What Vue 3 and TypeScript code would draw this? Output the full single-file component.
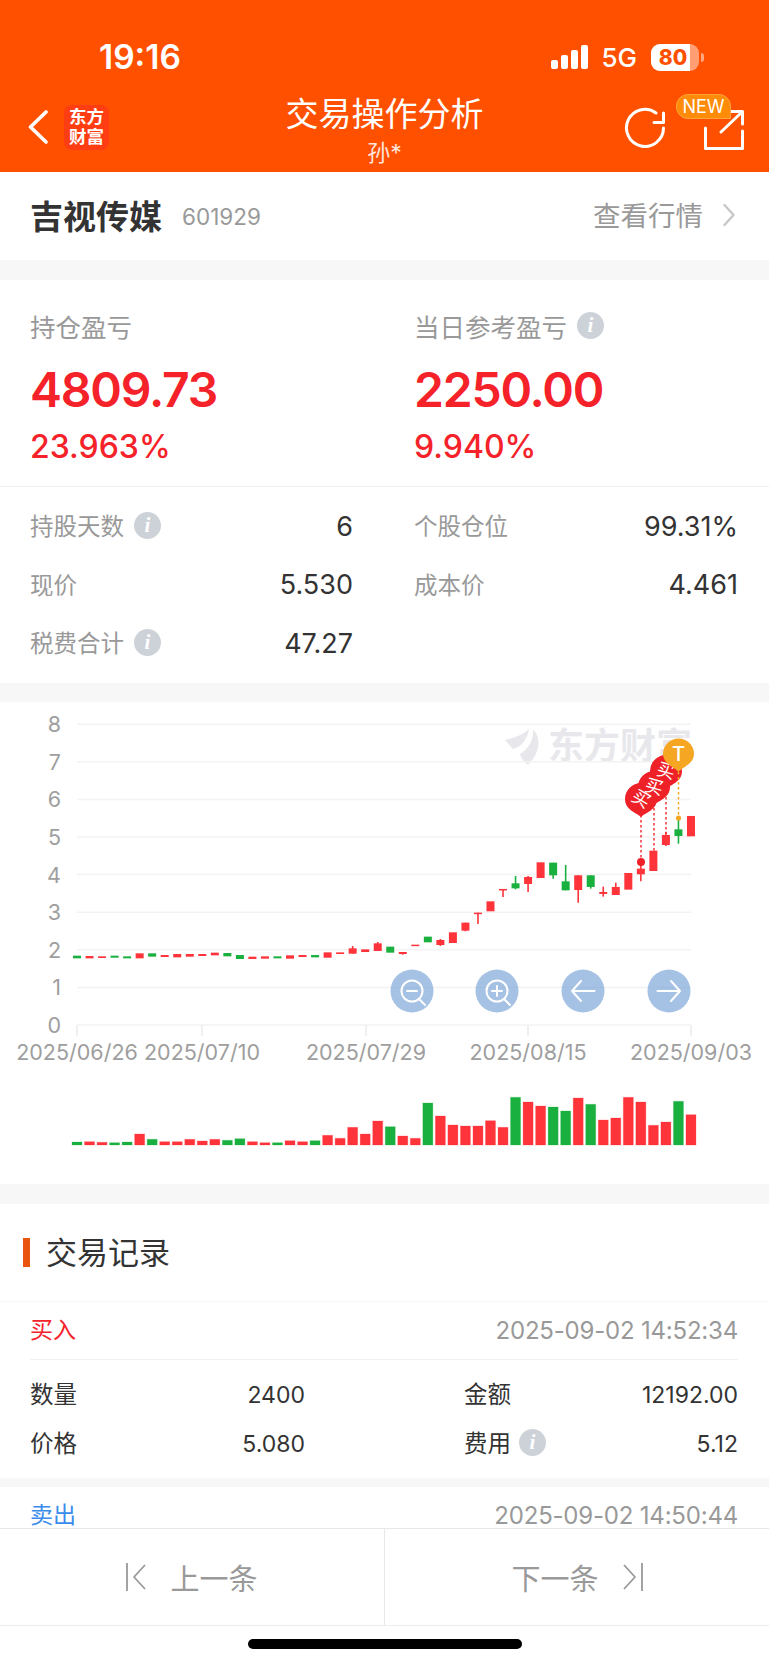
<script setup lang="ts">
import { computed } from 'vue'

type Candle = [number, number, number?, number?]

// [body high, body low, wick high, wick low], up = red
const candles: { d: Candle; up: boolean }[] = [
  { d: [1.844, 1.773], up: false },
  { d: [1.835, 1.773], up: true },
  { d: [1.826, 1.782], up: true },
  { d: [1.844, 1.79], up: false },
  { d: [1.826, 1.773], up: false },
  { d: [1.906, 1.773], up: true },
  { d: [1.906, 1.817], up: false },
  { d: [1.861, 1.808], up: true },
  { d: [1.888, 1.799], up: true },
  { d: [1.888, 1.817], up: true },
  { d: [1.888, 1.835], up: true },
  { d: [1.924, 1.853], up: true },
  { d: [1.915, 1.826], up: false },
  { d: [1.861, 1.755], up: false },
  { d: [1.817, 1.755], up: true },
  { d: [1.826, 1.764], up: true },
  { d: [1.826, 1.773], up: false },
  { d: [1.853, 1.764], up: true },
  { d: [1.861, 1.808], up: true },
  { d: [1.861, 1.799], up: false },
  { d: [1.932, 1.79], up: true },
  { d: [1.932, 1.888], up: true },
  { d: [2.039, 1.897, 2.101, 1.897], up: true },
  { d: [2.012, 1.941], up: true },
  { d: [2.172, 1.968, 2.207, 1.968], up: true },
  { d: [2.084, 1.924], up: false },
  { d: [1.942, 1.889, 1.942, 1.871], up: true },
  { d: [2.137, 2.102], up: true },
  { d: [2.35, 2.199], up: false },
  { d: [2.261, 2.128, 2.288, 2.102], up: true },
  { d: [2.465, 2.181], up: true },
  { d: [2.722, 2.509, 2.722, 2.492], up: true },
  { d: [2.988, 2.953, 2.988, 2.687], up: true },
  { d: [3.29, 3.024], up: true },
  { d: [3.618, 3.582, 3.618, 3.405], up: true },
  { d: [3.768, 3.635, 3.963, 3.609], up: false },
  { d: [3.937, 3.751, 3.963, 3.538], up: true },
  { d: [4.327, 3.91], up: true },
  { d: [4.318, 3.981, 4.318, 3.892], up: false },
  { d: [3.821, 3.582, 4.256, 3.582], up: false },
  { d: [3.981, 3.591, 3.981, 3.254], up: true },
  { d: [3.981, 3.671, 3.981, 3.626], up: false },
  { d: [3.538, 3.485, 3.68, 3.414], up: true },
  { d: [3.671, 3.458, 3.786, 3.458], up: true },
  { d: [4.043, 3.6], up: true },
  { d: [4.158, 4.008, 4.362, 3.821], up: true },
  { d: [4.637, 4.096], up: true },
  { d: [5.054, 4.788, 5.142, 4.761], up: true },
  { d: [5.204, 5.027, 5.497, 4.823], up: false },
  { d: [5.559, 5.018], up: true },
]

const volumes: number[] = [
  3, 3.3, 2.7, 2.3, 3, 11, 5.7, 3.3, 3.3, 5.7, 4, 5.7, 4.7, 6.3, 3.3, 2.3, 2.3, 4.3, 3.3, 4.3, 9.7, 6.7, 17.7, 11, 24,
  18.3, 9, 6.7, 42, 29, 20, 19, 19, 24.3, 17.7, 47.7, 43, 39, 38, 34, 47, 40.7, 25, 27, 47.7, 43, 19.7, 23, 43.7, 30.3,
]

const ZERO_Y = 323
const UNIT = 37.6
const STEP = 12.53
const priceY = (p: number) => ZERO_Y - p * UNIT
const barX = (i: number) => 77 + STEP * i

const grid = [0, 1, 2, 3, 4, 5, 6, 7, 8].map((v) => ({ v, y: priceY(v) }))
const dates = [
  { x: 77, t: '2025/06/26' },
  { x: 202, t: '2025/07/10' },
  { x: 366, t: '2025/07/29' },
  { x: 528, t: '2025/08/15' },
  { x: 691, t: '2025/09/03' },
]

const candleRects = computed(() =>
  candles.map((c, i) => ({
    x: barX(i),
    top: priceY(c.d[0]),
    h: Math.max((c.d[0] - c.d[1]) * UNIT, 1.5),
    wickTop: c.d[2] !== undefined ? priceY(c.d[2]) : null,
    wickBot: c.d[3] !== undefined ? priceY(c.d[3]) : null,
    up: c.up,
  }))
)

const volumeBars = computed(() =>
  volumes.map((h, i) => ({ x: barX(i) - 5, y: 443 - h, h, up: candles[i].up }))
)

const buys = [
  { x: 666, y: 70, end: 132, rot: 15 },
  { x: 654, y: 86, end: 150, rot: 15 },
  { x: 641, y: 98, end: 160, rot: 30 },
]

const stats = [
  { label: '持股天数', info: true, value: '6' },
  { label: '个股仓位', info: false, value: '99.31%' },
  { label: '现价', info: false, value: '5.530' },
  { label: '成本价', info: false, value: '4.461' },
  { label: '税费合计', info: true, value: '47.27' },
]

const tradeRows = [
  { label: '数量', info: false, value: '2400' },
  { label: '金额', info: false, value: '12192.00' },
  { label: '价格', info: false, value: '5.080' },
  { label: '费用', info: true, value: '5.12' },
]
</script>

<template>
  <div class="page">
    <header class="top">
      <div class="status">
        <span class="time">19:16</span>
        <div class="status-right">
          <svg class="signal" viewBox="0 0 38 24" fill="#fff">
            <rect x="0" y="15" width="7" height="9" rx="2" />
            <rect x="10" y="10" width="7" height="14" rx="2" />
            <rect x="20" y="5" width="7" height="19" rx="2" />
            <rect x="30" y="0" width="7" height="24" rx="2" />
          </svg>
          <span class="net">5G</span>
          <div class="battery">
            <span class="battery-fill"></span>
            <span class="battery-num">80</span>
          </div>
          <span class="battery-nub"></span>
        </div>
      </div>
      <div class="nav">
        <div class="nav-left">
          <svg class="back" viewBox="0 0 20 34" fill="none" stroke="#fff" stroke-width="3.6" stroke-linecap="round" stroke-linejoin="round">
            <path d="M18 2 L2.5 17 L18 32" />
          </svg>
          <div class="logo"><span>东方</span><span>财富</span></div>
        </div>
        <div class="nav-title">
          <div class="title">交易操作分析</div>
          <div class="sub">孙*</div>
        </div>
        <div class="nav-right">
          <svg class="refresh" viewBox="0 0 42 42" fill="none" stroke="#fff" stroke-width="3" stroke-linecap="round" stroke-linejoin="round">
            <path d="M39.5 21 A18.5 18.5 0 1 1 32 6" />
            <path d="M39.5 6 V15.5 H30" />
          </svg>
          <div class="share">
            <svg viewBox="0 0 40 40" fill="none" stroke="#fff" stroke-width="3" stroke-linecap="round" stroke-linejoin="round">
              <path d="M38.5 21 V38.5 H1.5 V18" />
              <path d="M17 22 L38 2" />
              <path d="M26 1.5 H38.5 V14" />
            </svg>
            <span class="new">NEW</span>
          </div>
        </div>
      </div>
    </header>

    <main class="content">
      <section class="stock">
        <span class="stock-name">吉视传媒</span>
        <span class="stock-code">601929</span>
        <span class="stock-link">查看行情</span>
        <svg class="stock-arrow" viewBox="0 0 12 24" fill="none" stroke="#c8c8c8" stroke-width="2.4" stroke-linecap="round" stroke-linejoin="round">
          <path d="M1.5 2 L10.5 12 L1.5 22" />
        </svg>
      </section>

      <section class="summary">
        <div class="pnl">
          <div class="pnl-col">
            <div class="pnl-label">持仓盈亏</div>
            <div class="pnl-num">4809.73</div>
            <div class="pnl-pct">23.963%</div>
          </div>
          <div class="pnl-col">
            <div class="pnl-label">当日参考盈亏<i class="info">i</i></div>
            <div class="pnl-num">2250.00</div>
            <div class="pnl-pct">9.940%</div>
          </div>
        </div>
        <div class="stats">
          <div v-for="s in stats" :key="s.label" class="stat">
            <span class="stat-label">{{ s.label }}<i v-if="s.info" class="info">i</i></span>
            <span class="stat-value">{{ s.value }}</span>
          </div>
        </div>
      </section>

      <section class="chart">
        <svg class="chart-svg" viewBox="0 0 769 482">
          <g fill="#e8e8ec">
            <path d="M505 38 C512 36 522 34 529 27 C527 38 521 45 513 47 Z" />
            <path d="M533 27 C541 35 541 50 528 63 C524 60 521 56 520 52 C528 47 534 38 533 27 Z" />
          </g>
          <text class="watermark" x="548" y="57">东方财富</text>

          <g v-for="g in grid" :key="g.v">
            <line x1="77" x2="691" :y1="g.y" :y2="g.y" stroke="#f3f3f3" stroke-width="1.5" />
            <text class="axis" x="61" :y="g.y + 8" text-anchor="end">{{ g.v }}</text>
          </g>
          <g v-for="d in dates" :key="d.t">
            <line :x1="d.x" :x2="d.x" y1="323" y2="334" stroke="#eaeaea" stroke-width="1.5" />
            <text class="axis" :x="d.x" y="358" text-anchor="middle">{{ d.t }}</text>
          </g>

          <g v-for="(c, i) in candleRects" :key="i" :fill="c.up ? '#ff333a' : '#1ab03f'" :stroke="c.up ? '#ff333a' : '#1ab03f'">
            <line v-if="c.wickTop !== null" :x1="c.x" :x2="c.x" :y1="c.wickTop" :y2="c.wickBot ?? 0" stroke-width="1.6" />
            <rect :x="c.x - 4" :y="c.top" width="8" :height="c.h" stroke="none" />
          </g>

          <!-- trade markers -->
          <g v-for="b in buys" :key="b.x">
            <line :x1="b.x" :x2="b.x" :y1="b.y" :y2="b.end" stroke="#f5333a" stroke-width="1.5" stroke-dasharray="2.5 2.5" />
            <path :d="`M${b.x} ${b.y + 17} C${b.x - 4} ${b.y + 13} ${b.x - 16} ${b.y + 10} ${b.x - 16} ${b.y - 1} A16 16 0 1 1 ${b.x + 16} ${b.y - 1} C${b.x + 16} ${b.y + 10} ${b.x + 4} ${b.y + 13} ${b.x} ${b.y + 17} Z`" fill="#ee2128" />
          </g>
          <text
            v-for="b in buys"
            :key="'t' + b.x"
            class="buy-text"
            :transform="`translate(${b.x} ${b.y - 1}) rotate(${b.rot})`"
            y="6"
            text-anchor="middle"
          >买</text>
          <circle cx="641" cy="160" r="4" fill="#ee2128" />
          <line x1="678.5" x2="678.5" y1="60" y2="115" stroke="#f5a623" stroke-width="1.5" stroke-dasharray="2.5 2.5" />
          <circle cx="678.5" cy="116" r="2.6" fill="#f5a623" />
          <path d="M678.5 70 C676 66 663 62 663 52 A15.5 15.5 0 1 1 694 52 C694 62 681 66 678.5 70 Z" fill="#f5a623" />
          <text class="t-text" x="678.5" y="59" text-anchor="middle">T</text>

          <!-- chart controls -->
          <g class="ctrl" transform="translate(412 289)">
            <circle class="ctrl-bg" r="21.5" />
            <g class="ctrl-ic">
              <circle r="10.5" />
              <path d="M8 9 L13 14 M-5 0 H5" />
            </g>
          </g>
          <g class="ctrl" transform="translate(497 289)">
            <circle class="ctrl-bg" r="21.5" />
            <g class="ctrl-ic">
              <circle r="10.5" />
              <path d="M8 9 L13 14 M-5 0 H5 M0 -5 V5" />
            </g>
          </g>
          <g class="ctrl" transform="translate(583 289)">
            <circle class="ctrl-bg" r="21.5" />
            <g class="ctrl-ic"><path d="M11.5 0 H-11 M-2 -10 L-11 0 L-2 10" /></g>
          </g>
          <g class="ctrl" transform="translate(669 289)">
            <circle class="ctrl-bg" r="21.5" />
            <g class="ctrl-ic"><path d="M-11.5 0 H11 M2 -10 L11 0 L2 10" /></g>
          </g>

          <rect
            v-for="(v, i) in volumeBars"
            :key="'v' + i"
            :x="v.x"
            :y="v.y"
            width="10"
            :height="v.h"
            :fill="v.up ? '#ff333a' : '#1ab03f'"
            :stroke="v.up ? '#ff333a' : '#1ab03f'"
            stroke-opacity="0.25"
          />
        </svg>
      </section>

      <section class="records">
        <div class="rec-title"><span class="rec-bar"></span><span class="rec-text">交易记录</span></div>
        <article class="trade">
          <div class="trade-head">
            <span class="buy">买入</span>
            <span class="trade-time">2025-09-02 14:52:34</span>
          </div>
          <div class="trade-body">
            <div v-for="r in tradeRows" :key="r.label" class="trade-cell">
              <span class="trade-label">{{ r.label }}<i v-if="r.info" class="info">i</i></span>
              <span>{{ r.value }}</span>
            </div>
          </div>
        </article>
        <article class="trade">
          <div class="trade-head">
            <span class="sell">卖出</span>
            <span class="trade-time">2025-09-02 14:50:44</span>
          </div>
        </article>
      </section>
    </main>

    <footer class="foot">
      <div class="pager">
        <div class="pager-btn">
          <svg viewBox="0 0 20 28" fill="none" stroke="#999" stroke-width="1.8" stroke-linejoin="round">
            <path d="M1 0 V28 M19 2 L8 14 L19 26" />
          </svg>
          <span>上一条</span>
        </div>
        <div class="pager-btn">
          <span>下一条</span>
          <svg viewBox="0 0 20 28" fill="none" stroke="#999" stroke-width="1.8" stroke-linejoin="round">
            <path d="M19 0 V28 M1 2 L12 14 L1 26" />
          </svg>
        </div>
      </div>
      <div class="home-area"><span class="home-bar"></span></div>
    </footer>
  </div>
</template>

<style>
html,
body {
  margin: 0;
  background: #fff;
}
</style>

<style scoped>
* {
  box-sizing: border-box;
}

.page {
  width: 769px;
  height: 1665px;
  display: flex;
  flex-direction: column;
  overflow: hidden;
  background: #f7f7f7;
  font-family: Inter, "Noto Sans CJK SC", sans-serif;
}

.top {
  height: 172px;
  flex: none;
  background: #ff5000;
  color: #fff;
}

.status {
  height: 90px;
  padding: 24px 0 0 99px;
  display: flex;
  justify-content: space-between;
  align-items: center;
}

.time {
  font-size: 33.5px;
  font-weight: 600;
}

.status-right {
  display: flex;
  align-items: center;
  padding-right: 65px;
}

.signal {
  width: 38px;
  height: 24px;
}

.net {
  margin-left: 12px;
  font-size: 26px;
  font-weight: 500;
}

.battery {
  position: relative;
  width: 48px;
  height: 27px;
  margin-left: 14px;
  border-radius: 9px;
  overflow: hidden;
  background: rgba(255, 255, 255, 0.45);
}

.battery-fill {
  position: absolute;
  left: 0;
  top: 0;
  bottom: 0;
  width: 39px;
  background: #fff;
}

.battery-num {
  position: absolute;
  inset: 0;
  padding-right: 4px;
  text-align: center;
  font-size: 21px;
  font-weight: 800;
  line-height: 27px;
  color: #ff5000;
}

.battery-nub {
  width: 3px;
  height: 9px;
  margin-left: 2px;
  border-radius: 0 3px 3px 0;
  background: rgba(255, 255, 255, 0.5);
}

.nav {
  height: 82px;
  display: grid;
  grid-template-columns: 1fr auto 1fr;
}

.nav-left {
  display: flex;
  align-items: center;
  padding: 0 0 8px 28px;
  gap: 16px;
}

.back {
  width: 20px;
  height: 34px;
}

.logo {
  width: 45px;
  height: 45px;
  border-radius: 8px;
  background: #ff3d12;
  display: flex;
  flex-direction: column;
  align-items: center;
  justify-content: center;
  font-size: 17.5px;
  font-weight: 700;
  line-height: 20px;
}

.nav-title {
  text-align: center;
  padding-top: 4px;
}

.title {
  font-size: 33px;
  line-height: 40px;
}

.sub {
  margin-top: 1px;
  font-size: 23px;
  line-height: 36px;
  opacity: 0.85;
}

.nav-right {
  display: flex;
  justify-content: flex-end;
  padding: 20px 25px 0 0;
  gap: 38px;
}

.refresh {
  width: 42px;
  height: 42px;
  margin-top: -3px;
}

.share {
  position: relative;
  width: 40px;
  height: 40px;
}

.share svg {
  width: 40px;
  height: 40px;
}

.new {
  position: absolute;
  left: -28px;
  top: -16px;
  width: 55px;
  height: 25px;
  border-radius: 12px 12px 0 12px;
  background: #ff8c08;
  border: 1px solid #ffa33d;
  font-size: 18px;
  font-weight: 400;
  line-height: 24px;
  text-align: center;
}

.content {
  flex: 1;
  min-height: 0;
  overflow: hidden;
}

.stock {
  height: 88px;
  padding: 0 34px 0 30px;
  display: flex;
  align-items: center;
  background: #fff;
}

.stock-name {
  margin-bottom: 2px;
  font-size: 33px;
  font-weight: 700;
  color: #333;
}

.stock-code {
  margin-left: 20px;
  font-size: 22.5px;
  color: #999;
}

.stock-link {
  margin-left: auto;
  margin-bottom: 4px;
  font-size: 27.5px;
  color: #999;
}

.stock-arrow {
  width: 12px;
  height: 24px;
  margin-left: 20px;
  margin-bottom: 2px;
}

.summary {
  margin-top: 20px;
  height: 403px;
  background: #fff;
}

.pnl {
  height: 207px;
  padding: 31px 31px 0 30px;
  display: grid;
  grid-template-columns: 384px 1fr;
  border-bottom: 1px solid #f0f0f0;
}

.pnl-label {
  display: flex;
  align-items: center;
  height: 28px;
  font-size: 25.5px;
  color: #999;
}

.pnl-num {
  margin-top: 23px;
  height: 56px;
  font-size: 48px;
  font-weight: 600;
  line-height: 56px;
  letter-spacing: -1.2px;
  color: #f5222a;
}

.pnl-pct {
  margin-top: 9px;
  height: 40px;
  font-size: 32px;
  font-weight: 500;
  line-height: 40px;
  color: #f5222a;
}

.info {
  display: inline-block;
  width: 27px;
  height: 27px;
  margin-left: 10px;
  border-radius: 50%;
  background: #cdd2d9;
  color: #fff;
  font: italic 700 21px/27px "Liberation Serif", serif;
  text-align: center;
  flex: none;
}

.stats {
  padding: 9px 31px 0 30px;
  display: grid;
  grid-template-columns: 323px 324px;
  column-gap: 61px;
  grid-auto-rows: 58.5px;
}

.stat {
  display: flex;
  align-items: center;
  justify-content: space-between;
}

.stat-label {
  display: flex;
  align-items: center;
  font-size: 23.5px;
  color: #999;
}

.stat-value {
  margin-top: 2px;
  font-size: 27px;
  color: #333;
}

.chart {
  margin-top: 19px;
  height: 482px;
  background: #fff;
}

.chart-svg {
  display: block;
  width: 769px;
  height: 482px;
}

.watermark {
  font-size: 36px;
  font-weight: 700;
  fill: #e8e8ec;
}

.axis {
  font-size: 21.5px;
  fill: #9e9e9e;
}

.buy-text {
  font-size: 18px;
  fill: #fff;
}

.t-text {
  font-size: 20px;
  font-weight: 500;
  fill: #fff;
}

.ctrl-bg {
  fill: #6d9dd4;
  opacity: 0.62;
}

.ctrl-ic {
  fill: none;
  stroke: #fff;
  stroke-width: 2;
  stroke-linecap: round;
  stroke-linejoin: round;
}

.records {
  margin-top: 20px;
  background: #f7f7f7;
}

.rec-title {
  position: relative;
  height: 97px;
  padding-left: 46px;
  display: flex;
  align-items: center;
  background: #fff;
  font-size: 31px;
  color: #333;
}

.rec-text {
  margin-bottom: 4px;
}

.rec-bar {
  position: absolute;
  left: 23px;
  top: 34px;
  width: 7px;
  height: 29px;
  background: #e9540f;
}

.trade {
  margin-top: 1px;
  margin-bottom: 9px;
  padding: 0 31px 0 30px;
  background: #fff;
}

.trade-head {
  height: 58px;
  display: flex;
  align-items: center;
  justify-content: space-between;
  border-bottom: 1px solid #f0f0f0;
  font-size: 23px;
}

.buy,
.sell {
  margin-bottom: 6px;
}

.buy {
  color: #f5222a;
}

.sell {
  color: #3b8bec;
}

.trade-time {
  font-size: 24px;
  letter-spacing: -0.2px;
  color: #999;
}

.trade-body {
  height: 118px;
  padding: 10px 0 9px;
  display: grid;
  grid-template-columns: 275px 274px;
  justify-content: space-between;
  grid-auto-rows: 49px;
}

.trade-cell {
  display: flex;
  align-items: center;
  justify-content: space-between;
  font-size: 23px;
  color: #333;
}

.trade-cell span {
  display: flex;
  align-items: center;
}

.trade-label {
  margin-bottom: 3px;
  font-size: 23.5px;
}

.trade-label .info {
  margin-left: 8px;
}

.foot {
  flex: none;
  height: 137px;
  background: #fff;
  border-top: 1px solid #e8e8e8;
}

.pager {
  height: 97px;
  display: grid;
  grid-template-columns: 384px 1fr;
  border-bottom: 1px solid #ececec;
}

.pager-btn {
  display: flex;
  align-items: center;
  justify-content: center;
  gap: 24px;
  font-size: 29px;
  color: #999;
}

.pager-btn + .pager-btn {
  border-left: 1px solid #e8e8e8;
}

.pager-btn svg {
  width: 20px;
  height: 28px;
}

.home-area {
  display: flex;
  justify-content: center;
  padding-top: 13px;
}

.home-bar {
  width: 274px;
  height: 10px;
  border-radius: 5px;
  background: #000;
}
</style>
